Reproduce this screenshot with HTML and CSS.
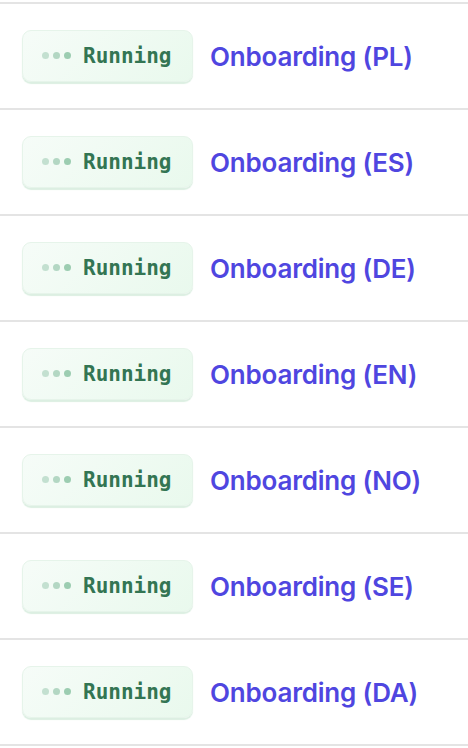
FILE: index.html
```html
<!DOCTYPE html>
<html lang="en">
<head>
    <meta charset="UTF-8">
    <meta name="viewport" content="width=device-width, initial-scale=1.0">
    <title>Workflows</title>
    <link rel="stylesheet" href="styles.css">
</head>
<body>
    <div class="list">
        <div class="row">
            <span class="badge"><span class="dots"><i></i><i></i><i></i></span>Running</span>
            <a class="name" href="#">Onboarding (PL)</a>
        </div>
        <div class="row">
            <span class="badge"><span class="dots"><i></i><i></i><i></i></span>Running</span>
            <a class="name" href="#">Onboarding (ES)</a>
        </div>
        <div class="row">
            <span class="badge"><span class="dots"><i></i><i></i><i></i></span>Running</span>
            <a class="name" href="#">Onboarding (DE)</a>
        </div>
        <div class="row">
            <span class="badge"><span class="dots"><i></i><i></i><i></i></span>Running</span>
            <a class="name" href="#">Onboarding (EN)</a>
        </div>
        <div class="row">
            <span class="badge"><span class="dots"><i></i><i></i><i></i></span>Running</span>
            <a class="name" href="#">Onboarding (NO)</a>
        </div>
        <div class="row">
            <span class="badge"><span class="dots"><i></i><i></i><i></i></span>Running</span>
            <a class="name" href="#">Onboarding (SE)</a>
        </div>
        <div class="row">
            <span class="badge"><span class="dots"><i></i><i></i><i></i></span>Running</span>
            <a class="name" href="#">Onboarding (DA)</a>
        </div>
    </div>
</body>
</html>
```
FILE: styles.css
```css
body {
    margin: 0;
    padding-top: 2px;
    background: #fff;
    font-family: 'Inter', sans-serif;
}
.list {
    border-bottom: 2px solid #e4e4e4;
}
.row {
    display: flex;
    align-items: center;
    gap: 17px;
    height: 104px;
    padding-left: 22px;
    border-top: 2px solid #e4e4e4;
}
.badge {
    display: flex;
    align-items: center;
    gap: 12px;
    box-sizing: border-box;
    width: 171px;
    height: 52px;
    padding: 0 0 1px 19px;
    border: 1px solid #e6f4ea;
    border-radius: 9px;
    background: linear-gradient(135deg, #f6fcf8 0%, #e9f9ed 100%);
    box-shadow: 0 2px 1px #dcefe2;
    font-family: 'DejaVu Sans Mono', monospace;
    font-weight: bold;
    font-size: 21px;
    color: #337553;
}
.dots {
    display: flex;
    gap: 4px;
}
.dots i {
    width: 7px;
    height: 7px;
    border-radius: 50%;
    background: #c3e0d0;
}
.dots i:nth-child(2) {
    background: #b3d7c3;
}
.dots i:nth-child(3) {
    background: #9ccdb1;
}
.name {
    color: #4f46e0;
    font-size: 26px;
    font-weight: 600;
    text-decoration: none;
    letter-spacing: -0.2px;
}
```
